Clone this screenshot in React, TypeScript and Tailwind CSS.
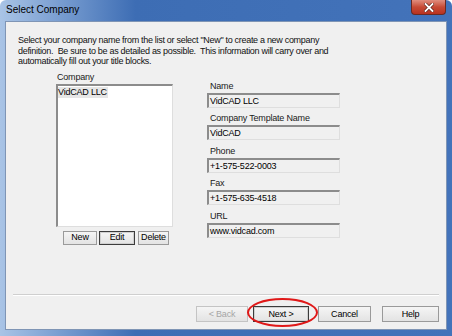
import React from 'react';

const font = { fontFamily: '"Liberation Sans", Arial, sans-serif' };

function Field({ label, value }: { label: string; value: string }) {
  return (
    <div className="flex flex-col">
      <span className="pl-[3px] text-[9px] leading-[11px] tracking-[-0.2px] text-[#1a1a1a]">{label}</span>
      <div className="mt-[1px] h-[15px] border-t-2 border-l-2 border-t-[#8c8c8c] border-l-[#8c8c8c] border-b border-r border-b-[#dedede] border-r-[#dedede] bg-[#f0f0f0] pl-[1px] text-[9px] leading-[12px] tracking-[-0.2px] text-black">
        {value}
      </div>
    </div>
  );
}

function Btn({
  children,
  className = '',
  disabled = false,
  focused = false,
}: {
  children: React.ReactNode;
  className?: string;
  disabled?: boolean;
  focused?: boolean;
}) {
  return (
    <button
      type="button"
      className={`flex items-center justify-center border bg-gradient-to-b from-[#f5f5f5] to-[#e3e3e3] text-[9px] leading-none tracking-[-0.2px] ${
        focused ? 'border-[#3c3c3c] shadow-[inset_0_0_0_1px_#d0d0d0]' : 'border-[#9a9a9a]'
      } ${disabled ? 'text-[#a6a6a6] border-[#c4c4c4]' : 'text-black'} ${className}`}
    >
      {children}
    </button>
  );
}

export default function App() {
  return (
    <div
      style={font}
      className="relative flex h-[336px] w-[452px] flex-col rounded-t-[6px] bg-gradient-to-r from-[#a9c4e6] via-[#3d6db4] via-30% to-[#4373ba]"
    >
      {/* title bar */}
      <div className="flex h-[21px] items-start">
        <span className="pl-[6px] pt-[4px] text-[10px] leading-[12px] text-black">Select Company</span>
        <div className="ml-auto mr-[6px] flex h-[15px] w-[35px] items-center justify-center rounded-b-[4px] border border-t-0 border-[#6b2a22] bg-gradient-to-b from-[#e08d7e] via-[#c74a35] to-[#b8321f]">
          <svg width="10" height="9" viewBox="0 0 10 9">
            <path d="M1.5 1 L8.5 8 M8.5 1 L1.5 8" stroke="#5a2018" strokeWidth="3.2" strokeLinecap="square" />
            <path d="M1.5 1 L8.5 8 M8.5 1 L1.5 8" stroke="#ffffff" strokeWidth="1.8" strokeLinecap="square" />
          </svg>
        </div>
      </div>

      {/* client area */}
      <div className="mx-[5px] mb-[6px] flex flex-1 flex-col border border-[#7f95b5] bg-[#f0f0f0]">
        <p className="ml-[12px] mt-[13px] w-[322px] text-[9px] leading-[10.5px] tracking-[-0.3px] text-[#111]">
          Select your company name from the list or select "New" to create a new company definition.&nbsp; Be sure to be as
          detailed as possible.&nbsp; This information will carry over and automatically fill out your title blocks.
        </p>

        <div className="mt-[5px] flex">
          {/* left column */}
          <div className="ml-[50px] flex w-[117px] flex-col">
            <span className="pl-[1px] text-[9px] leading-[11px] tracking-[-0.2px] text-[#1a1a1a]">Company</span>
            <div className="mt-[1px] h-[143px] border-t-2 border-l-2 border-t-[#8c8c8c] border-l-[#8c8c8c] border-b border-r border-b-[#dedede] border-r-[#dedede] bg-white">
              <div className="mt-[1px] w-fit bg-[#e6e6e6] pr-[1px] text-[9px] leading-[11px] tracking-[-0.2px] text-black">VidCAD LLC</div>
            </div>
            <div className="mt-[4px] flex gap-[2px] pl-[7px]">
              <Btn className="h-[14px] w-[34px]">New</Btn>
              <Btn focused className="h-[14px] w-[36px]">Edit</Btn>
              <Btn className="ml-[1px] h-[14px] w-[31px]">Delete</Btn>
            </div>
          </div>

          {/* right column */}
          <div className="ml-[34px] mt-[9px] flex w-[133px] flex-col gap-[5.5px]">
            <Field label="Name" value="VidCAD LLC" />
            <Field label="Company Template Name" value="VidCAD" />
            <Field label="Phone" value="+1-575-522-0003" />
            <Field label="Fax" value="+1-575-635-4518" />
            <Field label="URL" value="www.vidcad.com" />
          </div>
        </div>

        <div className="mx-[7px] mt-auto h-[2px] border-t border-b border-t-[#cfcfcf] border-b-white" />

        <div className="mb-[7px] mt-[10px] flex pl-[190px]">
          <Btn disabled className="h-[16px] w-[52px]">&lt; Back</Btn>
          <Btn focused className="ml-[5px] h-[16px] w-[56px]">Next &gt;</Btn>
          <Btn className="ml-[9px] h-[16px] w-[53px]">Cancel</Btn>
          <Btn className="ml-[11px] h-[16px] w-[57px]">Help</Btn>
        </div>
      </div>

      {/* red highlight ellipse around Next */}
      <div className="pointer-events-none absolute left-[247px] top-[298px] h-[29px] w-[71px] rounded-[50%] border-[2.5px] border-[#e01818]" />
    </div>
  );
}
